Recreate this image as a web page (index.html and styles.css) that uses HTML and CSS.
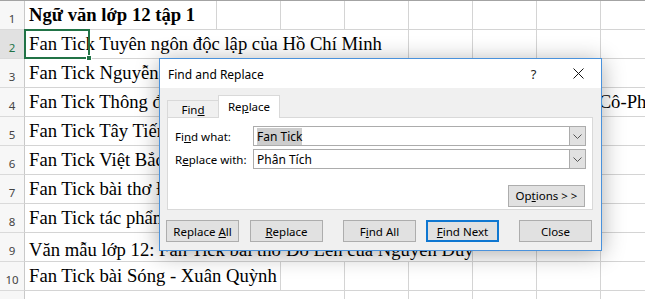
FILE: index.html
```html
<!DOCTYPE html>
<html>

<head>
  <title>Find and Replace</title>
  <meta charset="UTF-8">
  <meta name="viewport" content="width=device-width, initial-scale=1">
  <link rel="stylesheet" href="styles.css">
</head>

<body>
  <div class="sheet">
    <div class="row">
      <div class="rh">1</div>
      <div class="cell s3 bold">Ngữ văn lớp 12 tập 1</div>
      <div class="cell"></div><div class="cell"></div><div class="cell"></div><div class="cell"></div>
      <div class="cell"></div><div class="cell"></div><div class="cell"></div>
    </div>
    <div class="row">
      <div class="rh active">2</div>
      <div class="cell s6">Fan Tick Tuyên ngôn độc lập của Hồ Chí Minh</div>
      <div class="cell"></div><div class="cell"></div><div class="cell"></div><div class="cell"></div>
      <div class="selection"><span class="handle"></span></div>
    </div>
    <div class="row">
      <div class="rh">3</div>
      <div class="cell s9">Fan Tick Nguyễn Đình Chiểu, ngôi sao sáng trong văn nghệ dân tộc</div>
      <div class="cell"></div>
    </div>
    <div class="row">
      <div class="rh">4</div>
      <div class="cell s10">Fan Tick Thông điệp nhân Ngày thế giới phòng chống AIDS 1-12-2003 của Cô-Phi An-nan</div>
    </div>
    <div class="row">
      <div class="rh">5</div>
      <div class="cell s9">Fan Tick Tây Tiến của Quang Dũng</div>
      <div class="cell"></div>
    </div>
    <div class="row">
      <div class="rh">6</div>
      <div class="cell s9">Fan Tick Việt Bắc của Tố Hữu</div>
      <div class="cell"></div>
    </div>
    <div class="row">
      <div class="rh">7</div>
      <div class="cell s9">Fan Tick bài thơ Đất Nước của Nguyễn Khoa Điềm</div>
      <div class="cell"></div>
    </div>
    <div class="row">
      <div class="rh">8</div>
      <div class="cell s9">Fan Tick tác phẩm Vợ chồng A Phủ của Tô Hoài</div>
      <div class="cell"></div>
    </div>
    <div class="row">
      <div class="rh">9</div>
      <div class="cell s7 low">Văn mẫu lớp 12: Fan Tick bài thơ Đò Lèn của Nguyễn Duy</div>
      <div class="cell"></div><div class="cell"></div><div class="cell"></div>
    </div>
    <div class="row">
      <div class="rh">10</div>
      <div class="cell s4">Fan Tick bài Sóng - Xuân Quỳnh</div>
      <div class="cell"></div><div class="cell"></div><div class="cell"></div><div class="cell"></div>
      <div class="cell"></div><div class="cell"></div>
    </div>
    <div class="row">
      <div class="rh">11</div>
      <div class="cell s5 low">Fan Tick tác phẩm Chiếc thuyền ngoài xa</div>
      <div class="cell"></div><div class="cell"></div><div class="cell"></div><div class="cell"></div>
      <div class="cell"></div>
    </div>
  </div>

  <div class="dialog">
    <div class="titlebar">
      <span class="title">Find and Replace</span>
      <span class="tb-btn help">?</span>
      <span class="tb-btn">
        <svg width="11" height="11" viewBox="0 0 11 11"><path d="M0.5 0.5L10.5 10.5M10.5 0.5L0.5 10.5" stroke="#111" stroke-width="1"/></svg>
      </span>
    </div>
    <div class="body">
      <div class="tabs">
        <div class="tab"><span>Fin<u>d</u></span></div>
        <div class="tab current"><span>Re<u>p</u>lace</span></div>
      </div>
      <div class="panel">
        <label>Fi<u>n</u>d what:</label>
        <div class="combo">
          <span class="value"><span class="picked">Fan Tick</span></span>
          <span class="drop"><svg width="9" height="5" viewBox="0 0 9 5"><path d="M0.5 0.5L4.5 4.5L8.5 0.5" fill="none" stroke="#555"/></svg></span>
        </div>
        <label>R<u>e</u>place with:</label>
        <div class="combo">
          <span class="value">Phân Tích</span>
          <span class="drop"><svg width="9" height="5" viewBox="0 0 9 5"><path d="M0.5 0.5L4.5 4.5L8.5 0.5" fill="none" stroke="#555"/></svg></span>
        </div>
        <div class="btn options"><span>Op<u>t</u>ions &gt; &gt;</span></div>
      </div>
      <div class="actions">
        <div class="btn"><span>Replace <u>A</u>ll</span></div>
        <div class="btn"><span><u>R</u>eplace</span></div>
        <div class="btn far"><span>F<u>i</u>nd All</span></div>
        <div class="btn default"><span><u>F</u>ind Next</span></div>
        <div class="btn far"><span>Close</span></div>
      </div>
    </div>
  </div>
</body>
</html>
```

FILE: styles.css
```css
*{
  box-sizing:border-box;
}

body,
html {
  margin:0;
  width:645px;
  height:299px;
  overflow:hidden;
  background:#fff;
}

body {
  position:relative;
}

/* sheet */

.sheet{
  border-top:1px solid #a3a3a3;
}

.row{
  display:grid;
  grid-template-columns:25px repeat(10, 64px);
  height:29px;
  position:relative;
}

.rh{
  background:#f7f7f7;
  border-right:1px solid #c9c9c9;
  border-bottom:1px solid #dadada;
  color:#444;
  font-family:"Noto Sans", sans-serif;
  font-size:11.5px;
  display:flex;
  align-items:flex-end;
  justify-content:center;
  padding-bottom:3px;
}
.rh.active{
  background:#e1e1e1;
  color:#217346;
}

.cell{
  border-right:1px solid #d4d4d4;
  border-bottom:1px solid #d4d4d4;
  font-family:"Liberation Serif", serif;
  font-size:18.67px;
  line-height:21px;
  color:#000;
  white-space:nowrap;
  overflow:hidden;
  display:flex;
  align-items:flex-end;
  padding:0 0 4px 4px;
}
.cell.bold{
  font-weight:bold;
}
.cell.low{
  padding-bottom:1px;
}
.s3{ grid-column:span 3; }
.s4{ grid-column:span 4; }
.s5{ grid-column:span 5; }
.s6{ grid-column:span 6; }
.s7{ grid-column:span 7; }
.s9{ grid-column:span 9; }
.s10{ grid-column:span 10; }

.selection{
  position:absolute;
  left:24px;
  top:-1px;
  width:66px;
  height:30px;
  border:2px solid #217346;
}
.selection .handle{
  position:absolute;
  right:-4px;
  bottom:-4px;
  width:6px;
  height:6px;
  background:#217346;
  border:1px solid #fff;
}

/* dialog */

.dialog{
  position:absolute;
  left:159px;
  top:58px;
  width:443px;
  height:193px;
  border:1px solid #4a92dc;
  background:#f0f0f0;
  box-shadow:0 3px 22px rgba(0,0,0,0.32);
  font-family:"Noto Sans", sans-serif;
  font-size:11.5px;
  color:#000;
  display:flex;
  flex-direction:column;
}

.titlebar{
  height:29px;
  background:#fff;
  display:flex;
  align-items:center;
  padding-left:8px;
}
.titlebar .title{
  flex:1;
  font-size:12px;
  margin-top:1px;
}
.tb-btn{
  width:45px;
  height:29px;
  display:flex;
  align-items:center;
  justify-content:center;
}
.tb-btn.help{
  font-size:13px;
  color:#222;
}

.body{
  flex:1;
  padding:7px 8px 0 7px;
  display:flex;
  flex-direction:column;
}

.tabs{
  display:flex;
  align-items:flex-end;
  height:22px;
  position:relative;
  z-index:1;
}
.tab{
  width:51px;
  height:17px;
  border:1px solid #d9d9d9;
  border-bottom:none;
  border-right:none;
  display:flex;
  align-items:center;
  justify-content:center;
  padding-top:1px;
}
.tab.current{
  width:62px;
  height:23px;
  margin-bottom:-1px;
  background:#fff;
  border-right:1px solid #d9d9d9;
  padding-bottom:3px;
}

.panel{
  height:93px;
  background:#fff;
  border:1px solid #d9d9d9;
  display:grid;
  grid-template-columns:78px 1fr;
  grid-template-rows:20px 20px;
  row-gap:3px;
  align-items:center;
  padding:8px 6px 0 7px;
}
.panel label{
  padding-top:1px;
}

.combo{
  height:20px;
  border:1px solid #acacac;
  display:flex;
  align-items:stretch;
}
.combo .value{
  flex:1;
  padding-left:3px;
  display:flex;
  align-items:center;
  font-size:12px;
}
.combo .picked{
  background:#cdcdcd;
}
.combo .drop{
  width:17px;
  background:#e1e1e1;
  border:1px solid #acacac;
  margin:-1px -1px -1px 0;
  display:flex;
  align-items:center;
  justify-content:center;
}

.btn{
  width:73px;
  height:22px;
  background:#e1e1e1;
  border:1px solid #adadad;
  display:flex;
  align-items:center;
  justify-content:center;
  white-space:pre;
}
.btn.default{
  border:2px solid #0f77d1;
}

.options{
  grid-column:1 / 3;
  justify-self:end;
  width:77px;
  margin-top:10px;
  margin-right:1px;
}

.actions{
  display:flex;
  gap:11px;
  margin-top:10px;
  margin-left:-1px;
}
.actions .far{
  margin-left:9px;
}
.actions .default{
  margin-left:-1px;
}
```
